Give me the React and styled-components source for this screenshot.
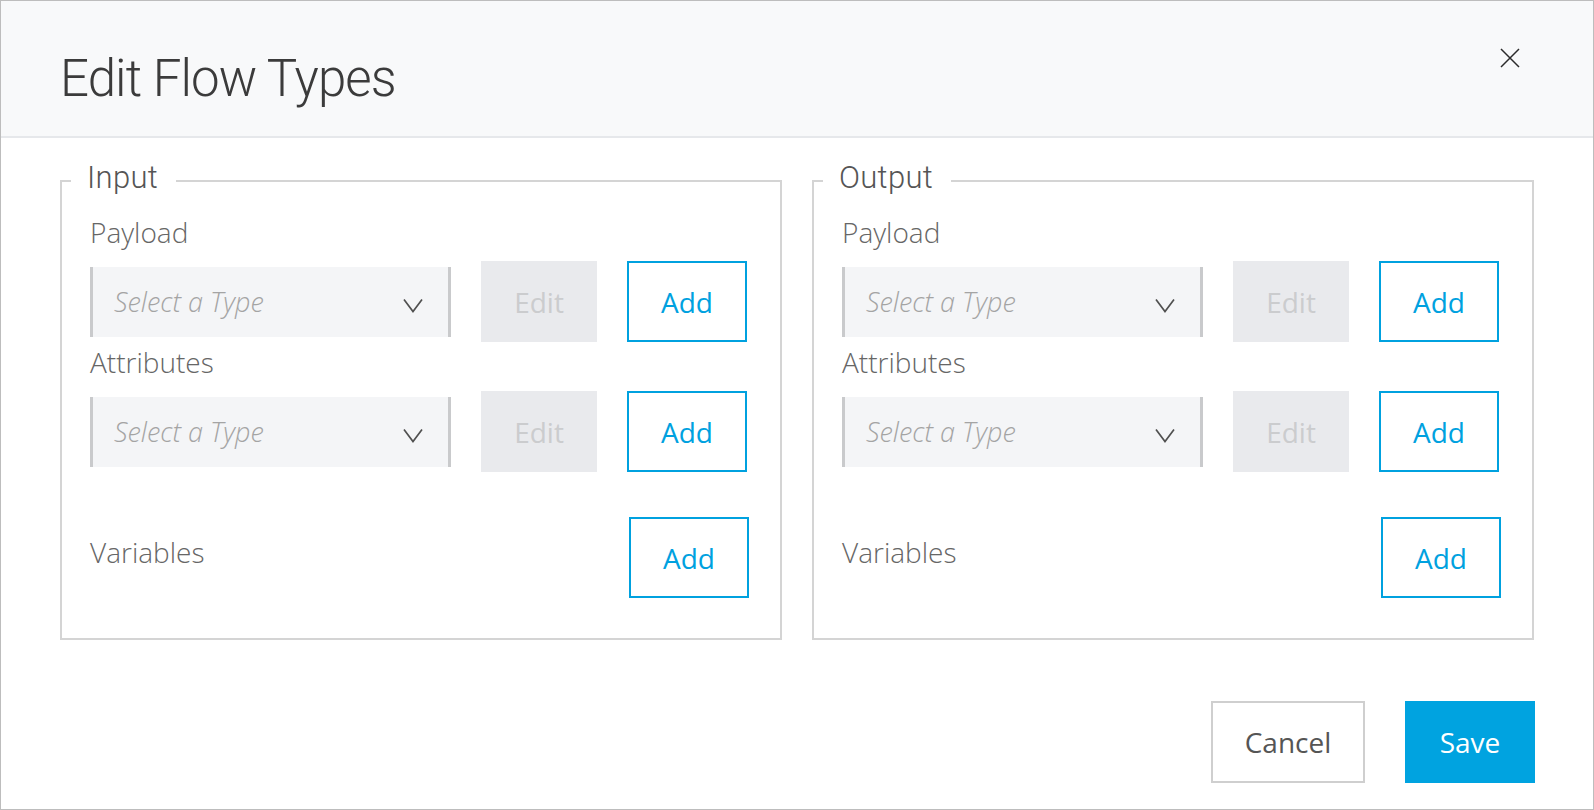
import React from 'react';
import styled, { createGlobalStyle } from 'styled-components';

const GlobalStyle = createGlobalStyle`
  html, body {
    margin: 0;
    padding: 0;
    background: #fff;
  }
  body {
    font-family: "Open Sans", "Liberation Sans", sans-serif;
  }
  * {
    box-sizing: border-box;
  }
`;

const Modal = styled.div`
  width: 1594px;
  height: 810px;
  border: 1px solid #bdbdbd;
  display: flex;
  flex-direction: column;
  background: #fff;
`;

const Header = styled.header`
  flex: none;
  height: 137px;
  display: flex;
  justify-content: space-between;
  align-items: flex-start;
  padding: 48px 73px 0 59px;
  background: #f8f9fa;
  border-bottom: 2px solid #e6e8eb;
`;

const Title = styled.h1`
  margin: 0;
  font-family: Roboto, "DejaVu Sans", sans-serif;
  font-weight: 300;
  font-size: 51px;
  line-height: 60px;
  letter-spacing: -0.9px;
  color: #3b3b3b;
`;

const CloseButton = styled.button`
  margin-top: -1px;
  padding: 0;
  border: none;
  background: none;
  display: flex;
  cursor: pointer;
`;

const Body = styled.div`
  display: grid;
  grid-template-columns: 1fr 1fr;
  gap: 30px;
  padding: 22px 59px 0 59px;
`;

const Group = styled.fieldset`
  margin: 0;
  min-width: 0;
  border: 2px solid #d4d4d4;
  padding: 13px 33px 40px 9px;
`;

const Legend = styled.legend`
  padding: 0 18px 5px 16px;
  font-family: Roboto, "DejaVu Sans", sans-serif;
  font-weight: 300;
  font-size: 31px;
  line-height: 36px;
  letter-spacing: 0.3px;
  color: #555;
`;

const Content = styled.div`
  padding-left: 19px;
`;

const FieldLabel = styled.div`
  font-size: 28px;
  font-weight: 300;
  line-height: 36px;
  color: #666;
  margin-top: ${({ $first }) => ($first ? '0' : '2px')};
  margin-bottom: 11px;
`;

const Row = styled.div`
  display: flex;
  align-items: center;
  gap: 30px;
  height: 81px;
`;

const Select = styled.div`
  flex: 1;
  height: 70px;
  display: flex;
  align-items: center;
  justify-content: space-between;
  padding: 0 25px 0 21px;
  background: #f4f5f7;
  border-left: 3px solid #c9cacc;
  border-right: 3px solid #c9cacc;
`;

const Placeholder = styled.span`
  font-size: 27px;
  font-weight: 300;
  font-style: italic;
  color: #a4a4a4;
`;

const Button = styled.button`
  flex: none;
  height: 81px;
  padding: 0;
  font-family: "Open Sans", "Liberation Sans", sans-serif;
  font-size: 28px;
  cursor: pointer;
`;

const EditButton = styled(Button)`
  width: 116px;
  border: none;
  background: #e9eaed;
  color: #cbccce;
`;

const AddButton = styled(Button)`
  width: 120px;
  border: 2px solid #00a1df;
  background: #fff;
  color: #00a1df;
  margin-right: ${({ $shift }) => ($shift ? '-2px' : '0')};
`;

const VariablesRow = styled.div`
  display: flex;
  justify-content: space-between;
  align-items: flex-start;
  margin-top: 45px;
`;

const VariablesLabel = styled(FieldLabel)`
  margin: 17px 0 0;
`;

const Footer = styled.footer`
  display: flex;
  justify-content: flex-end;
  gap: 40px;
  padding: 61px 58px 0 0;
`;

const CancelButton = styled(Button)`
  width: 154px;
  height: 82px;
  border: 2px solid #cfcfcf;
  background: #fff;
  color: #555;
`;

const SaveButton = styled(Button)`
  width: 130px;
  height: 82px;
  border: none;
  background: #00a3e0;
  color: #fff;
`;

const ChevronIcon = styled.svg`
  flex: none;
  margin-top: 8px;
`;

const Chevron = () => (
  <ChevronIcon width="20" height="15" viewBox="0 0 20 15">
    <polyline points="1,1.5 10,13.5 19,1.5" fill="none" stroke="#505050" strokeWidth="1.7" />
  </ChevronIcon>
);

const CloseIcon = () => (
  <svg width="20" height="20" viewBox="0 0 20 20">
    <path d="M1 1 L19 19 M19 1 L1 19" stroke="#2b2b2b" strokeWidth="1.5" />
  </svg>
);

const TypeRow = () => (
  <Row>
    <Select>
      <Placeholder>Select a Type</Placeholder>
      <Chevron />
    </Select>
    <EditButton disabled>Edit</EditButton>
    <AddButton>Add</AddButton>
  </Row>
);

const FlowGroup = ({ title }) => (
  <Group>
    <Legend>{title}</Legend>
    <Content>
      <FieldLabel $first>Payload</FieldLabel>
      <TypeRow />
      <FieldLabel>Attributes</FieldLabel>
      <TypeRow />
      <VariablesRow>
        <VariablesLabel>Variables</VariablesLabel>
        <AddButton $shift>Add</AddButton>
      </VariablesRow>
    </Content>
  </Group>
);

export default function App() {
  return (
    <>
      <GlobalStyle />
      <Modal>
        <Header>
          <Title>Edit Flow Types</Title>
          <CloseButton aria-label="Close">
            <CloseIcon />
          </CloseButton>
        </Header>
        <Body>
          <FlowGroup title="Input" />
          <FlowGroup title="Output" />
        </Body>
        <Footer>
          <CancelButton>Cancel</CancelButton>
          <SaveButton>Save</SaveButton>
        </Footer>
      </Modal>
    </>
  );
}
